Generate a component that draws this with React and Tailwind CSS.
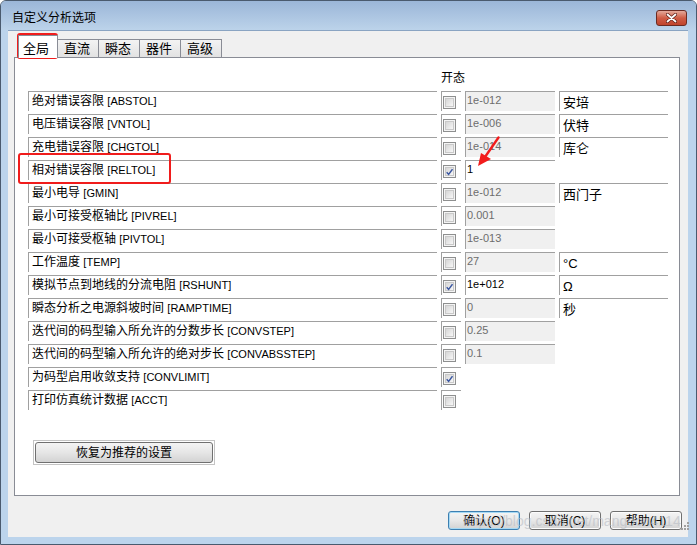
import React from 'react';

const rows = [
  { label: '绝对错误容限', code: '[ABSTOL]', checked: false, value: '1e-012', unit: '安培' },
  { label: '电压错误容限', code: '[VNTOL]', checked: false, value: '1e-006', unit: '伏特' },
  { label: '充电错误容限', code: '[CHGTOL]', checked: false, value: '1e-014', unit: '库仑' },
  { label: '相对错误容限', code: '[RELTOL]', checked: true, value: '1' },
  { label: '最小电导', code: '[GMIN]', checked: false, value: '1e-012', unit: '西门子' },
  { label: '最小可接受枢轴比', code: '[PIVREL]', checked: false, value: '0.001' },
  { label: '最小可接受枢轴', code: '[PIVTOL]', checked: false, value: '1e-013' },
  { label: '工作温度', code: '[TEMP]', checked: false, value: '27', unit: '°C' },
  { label: '模拟节点到地线的分流电阻', code: '[RSHUNT]', checked: true, value: '1e+012', unit: 'Ω' },
  { label: '瞬态分析之电源斜坡时间', code: '[RAMPTIME]', checked: false, value: '0', unit: '秒' },
  { label: '迭代间的码型输入所允许的分数步长', code: '[CONVSTEP]', checked: false, value: '0.25' },
  { label: '迭代间的码型输入所允许的绝对步长', code: '[CONVABSSTEP]', checked: false, value: '0.1' },
  { label: '为码型启用收敛支持', code: '[CONVLIMIT]', checked: true },
  { label: '打印仿真统计数据', code: '[ACCT]', checked: false },
];

const tabs = ['直流', '瞬态', '器件', '高级'];

function Check({ checked }) {
  return (
    <div className="w-[13px] h-[13px] border border-[#8e8f8f] bg-[#f4f4f4] p-[1px]">
      <div className="w-full h-full border border-[#c9c9c9] bg-linear-to-br from-[#d6d6d6] to-[#f7f7f7] flex items-center justify-center">
        {checked && (
          <svg width="8" height="8" viewBox="0 0 8 8">
            <path d="M0.8 4.2 L3 6.8 L7.4 0.8" fill="none" stroke="#3a56a0" strokeWidth="1.6" />
          </svg>
        )}
      </div>
    </div>
  );
}

function Row({ row }) {
  const enabled = row.checked && row.value;
  return (
    <div className="flex h-[23px] gap-[4px]">
      <div className="w-[409px] h-[20px] border-t border-l border-[#a0a0a0] pl-[3px] leading-[19px] text-[12px] text-black whitespace-nowrap">
        {row.label} <span className="text-[11px]">{row.code}</span>
      </div>
      <div className="w-[20px] h-[20px] border-t border-l border-[#a0a0a0] pl-[1px] pt-[4px]">
        <Check checked={row.checked} />
      </div>
      {row.value !== undefined ? (
        <div
          className={
            'w-[90px] h-[20px] border-t border-l border-[#a0a0a0] pl-[1px] pt-[1px] text-[11px] leading-[14px] ' +
            (enabled ? 'bg-white text-black' : 'bg-[#f0f0f0] text-[#6d6d6d]')
          }
        >
          {row.value}
        </div>
      ) : (
        <div className="w-[90px]" />
      )}
      {row.unit ? (
        <div className="w-[109px] h-[20px] border-t border-l border-[#a0a0a0] bg-white pl-[3px] pt-[3px] text-[13px] leading-[15px] text-black">
          {row.unit}
        </div>
      ) : (
        <div className="w-[109px]" />
      )}
    </div>
  );
}

function WinButton({ children, primary }) {
  return (
    <div
      className={
        'w-[72px] h-[19px] rounded-[3px] border flex items-center justify-center text-[12px] text-black bg-linear-to-b from-[#f4f4f4] via-[#e8e8e8] to-[#d2d2d2] ' +
        (primary ? 'border-[#3c7fb1] shadow-[inset_0_0_0_1px_#a6d9f4]' : 'border-[#707070] shadow-[inset_0_0_0_1px_#fcfcfc]')
      }
    >
      {children}
    </div>
  );
}

export default function App() {
  return (
    <div className="relative w-[697px] h-[545px] overflow-hidden bg-[#bcd4ec] border border-[#4a5a6e] rounded-t-[6px] font-['Liberation_Sans','Noto_Sans_CJK_SC',sans-serif]">
      {/* title bar */}
      <div className="h-[29px] flex items-center justify-between pl-[11px] pr-[9px] bg-linear-to-b from-[#9bb6d8] to-[#bcd3ea]">
        <span className="text-[12px] text-black pt-[4px]">自定义分析选项</span>
        <div className="mt-[4px] w-[31px] h-[16px] rounded-[3px] border border-[#6b2b22] bg-linear-to-b from-[#e3a99b] via-[#cf5c45] to-[#c0442c] flex items-center justify-center">
          <svg width="11" height="10" viewBox="0 0 11 10">
            <path d="M1.5 1.5 L9.5 8.5 M9.5 1.5 L1.5 8.5" stroke="#5a1e16" strokeWidth="3.2" strokeLinecap="round" />
            <path d="M1.5 1.5 L9.5 8.5 M9.5 1.5 L1.5 8.5" stroke="#ffffff" strokeWidth="1.8" strokeLinecap="round" />
          </svg>
        </div>
      </div>

      {/* client */}
      <div className="ml-[7px] w-[680px] h-[507px] bg-[#f0f0f0] border-t border-[#8aa4c2] flex flex-col">
        {/* tabs */}
        <div className="flex items-end h-[26px] pl-[10px] pt-[3px]">
          <div className="relative z-10 -mb-px w-[40px] h-[23px] bg-white border-t border-l border-r border-[#898c95] pl-[4px] pt-[3px] text-[13px] text-black">
            全局
          </div>
          {tabs.map((t) => (
            <div
              key={t}
              className="w-[41px] h-[18px] border-t border-r border-[#898c95] bg-linear-to-b from-[#f3f3f3] to-[#e2e2e2] pl-[6px] pt-[1px] text-[13px] leading-[16px] text-black"
            >
              {t}
            </div>
          ))}
        </div>

        {/* panel */}
        <div className="ml-[6px] w-[666px] h-[439px] bg-white border border-[#898c95] flex flex-col pl-[13px]">
          <div className="flex h-[33px] gap-[4px] pt-[13px]">
            <div className="w-[409px]" />
            <div className="text-[12px] leading-[14px] text-black">开态</div>
          </div>
          {rows.map((r) => (
            <Row key={r.label} row={r} />
          ))}
          <div className="mt-[27px] ml-[5px] w-[182px] h-[25px] border border-[#c4c4c4] p-px">
            <div className="w-full h-full rounded-[3px] border border-[#707070] bg-linear-to-b from-[#f4f4f4] via-[#e6e6e6] to-[#d3d3d3] flex items-center justify-center text-[12px] text-black">
              恢复为推荐的设置
            </div>
          </div>
        </div>

        {/* buttons */}
        <div className="flex justify-end gap-[9px] mt-[15px] pr-[6px]">
          <WinButton primary>确认(O)</WinButton>
          <WinButton>取消(C)</WinButton>
          <WinButton>帮助(H)</WinButton>
        </div>
      </div>

      {/* size grip */}
      <svg className="absolute left-[680px] top-[521px]" width="9" height="9" viewBox="0 0 9 9">
        <rect x="6" y="0" width="2" height="2" fill="#a0a0a0" />
        <rect x="3" y="3" width="2" height="2" fill="#a0a0a0" />
        <rect x="6" y="3" width="2" height="2" fill="#a0a0a0" />
        <rect x="0" y="6" width="2" height="2" fill="#a0a0a0" />
        <rect x="3" y="6" width="2" height="2" fill="#a0a0a0" />
        <rect x="6" y="6" width="2" height="2" fill="#a0a0a0" />
      </svg>

      {/* annotations */}
      <div className="absolute left-[16px] top-[32px] w-[41px] h-[26px] border-2 border-[#f01c1c] rounded-[3px]" />
      <div className="absolute left-[17px] top-[152px] w-[153px] h-[31px] border-2 border-[#f01c1c] rounded-[3px]" />
      <svg className="absolute left-[470px] top-[132px]" width="32" height="38" viewBox="0 0 32 38">
        <path d="M27.5 4.5 L14 24" stroke="#f21c1c" strokeWidth="2.4" strokeLinecap="round" />
        <polygon points="7,33 10,20 20,26" fill="#f21c1c" />
      </svg>

      {/* watermark */}
      <div className="absolute left-[462px] top-[511px] text-[14px] leading-[18px] text-[#b8bcc4] opacity-60 whitespace-nowrap">
        https://blog.csdn.net/mangoon4114
      </div>
    </div>
  );
}
